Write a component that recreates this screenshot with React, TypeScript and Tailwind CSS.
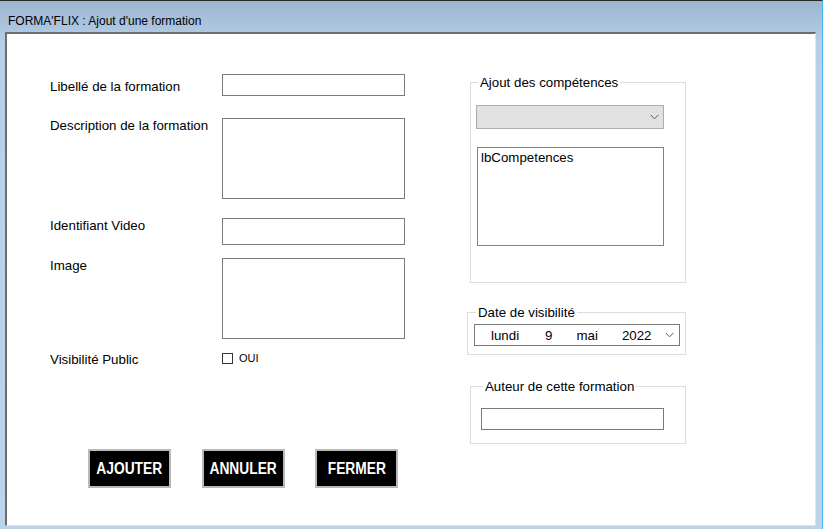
import React from "react";

const F = { fontFamily: "'Liberation Sans', Arial, sans-serif" };

function Chevron() {
  return (
    <svg width="9" height="6" viewBox="0 0 9 6" className="block">
      <path d="M0.5 0.8 L4.5 4.8 L8.5 0.8" fill="none" stroke="#5a5a5a" strokeWidth="1" />
    </svg>
  );
}

function Row({ label, mt, labelPt, fieldH }: { label: string; mt: string; labelPt: string; fieldH: string }) {
  return (
    <div className={`flex items-start ${mt}`}>
      <div className={`w-[172px] leading-[16px] ${labelPt}`}>{label}</div>
      <div className={`w-[183px] ${fieldH} border border-[#7a7a7a] bg-white`} />
    </div>
  );
}

function Btn({ text }: { text: string }) {
  return (
    <div className="w-[83px] h-[39px] border-2 border-[#b9b9b9] bg-black flex items-center justify-center">
      <span
        className="text-white font-bold text-[16px] leading-none inline-block scale-x-[0.86]"
        style={{ fontFamily: "'Liberation Sans', Arial, sans-serif" }}
      >
        {text}
      </span>
    </div>
  );
}

export default function App() {
  return (
    <div
      className="w-[823px] h-[529px] flex flex-col border-t border-t-[#2a2a2a] border-r border-r-[#3fbfea] bg-gradient-to-b from-[#9bb5d1] via-[#b7cfe8] via-[8%] to-[#bcd3eb] text-black"
      style={F}
    >
      <div className="h-[31px] pl-[8px] pt-[8px] flex items-center text-[12px] text-[#000]">
        FORMA'FLIX : Ajout d'une formation
      </div>
      <div className="ml-[5px] mr-[6px] h-[494px] border-l-2 border-t-2 border-l-[#6d6d6d] border-t-[#6d6d6d] border-r border-b border-r-[#e2e2e2] border-b-[#e2e2e2] bg-white flex text-[13.3px]">
        {/* left column */}
        <div className="pl-[43px] flex flex-col w-[398px] shrink-0">
          <Row label="Libellé de la formation" mt="mt-[40px]" labelPt="pt-[5px]" fieldH="h-[22px]" />
          <Row label="Description de la formation" mt="mt-[22px]" labelPt="pt-0" fieldH="h-[81px]" />
          <Row label="Identifiant Video" mt="mt-[19px]" labelPt="pt-0" fieldH="h-[27px]" />
          <Row label="Image" mt="mt-[13px]" labelPt="pt-0" fieldH="h-[81px]" />
          <div className="flex items-start mt-[13px]">
            <div className="w-[172px] leading-[16px]">Visibilité Public</div>
            <div className="flex items-center gap-[6px]">
              <div className="w-[11px] h-[11px] border border-[#333333] bg-white" />
              <span className="text-[11px] leading-[12px]">OUI</span>
            </div>
          </div>
          <div className="flex mt-[81px] ml-[38px]">
            <Btn text="AJOUTER" />
            <div className="ml-[31px]">
              <Btn text="ANNULER" />
            </div>
            <div className="ml-[30px]">
              <Btn text="FERMER" />
            </div>
          </div>
        </div>

        {/* right column */}
        <div className="flex flex-col ml-[65px] pt-[39px]">
          <fieldset className="w-[216px] border border-[#dcdcdc] pl-[5px] pb-[36px]">
            <legend className="ml-[2px] px-[2px] leading-[16px] pt-[2px]">Ajout des compétences</legend>
            <div className="mt-[14px] w-[188px] h-[24px] bg-[#e1e1e1] border border-[#adadad] flex items-center justify-end pr-[4px]">
              <Chevron />
            </div>
            <div className="mt-[18px] ml-[1px] w-[187px] h-[99px] border border-[#828282] px-[3px] pt-[2px] leading-[16px]">
              lbCompetences
            </div>
          </fieldset>

          <fieldset className="mt-[20px] -ml-[3px] w-[219px] border border-[#dcdcdc] pl-[6px] pb-[8px]">
            <legend className="ml-[2px] px-[2px] leading-[16px] pt-[2px]">Date de visibilité</legend>
            <div className="mt-[3px] w-[206px] h-[22px] border border-[#7a7a7a] flex items-center leading-[16px] pt-[2px]">
              <span className="ml-[16px]">lundi</span>
              <span className="ml-[26px]">9</span>
              <span className="ml-[24px]">mai</span>
              <span className="ml-[24px]">2022</span>
              <span className="ml-[13px] -mt-[2px]">
                <Chevron />
              </span>
            </div>
          </fieldset>

          <fieldset className="mt-[22px] w-[216px] border border-[#dcdcdc] pl-[10px] pb-[13px]">
            <legend className="ml-[2px] px-[2px] leading-[16px] pt-[2px]">Auteur de cette formation</legend>
            <div className="mt-[13px] w-[183px] h-[22px] border border-[#7a7a7a]" />
          </fieldset>
        </div>
      </div>
    </div>
  );
}
